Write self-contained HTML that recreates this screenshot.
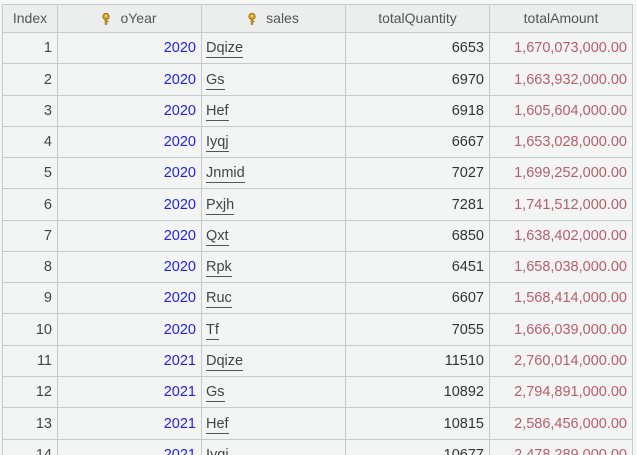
<!DOCTYPE html>
<html><head><style>
html,body{margin:0;width:637px;height:455px;overflow:hidden}
body{background:#f3f4f4;font-family:"Liberation Sans",sans-serif;font-size:14.5px;position:relative;color:#333}
.c{position:absolute;box-sizing:border-box;border-right:1px solid #c5cbcb;border-bottom:1px solid #c5cbcb;white-space:nowrap;overflow:hidden}
.h{background:#eceeee;color:#555;text-align:center;line-height:27px;font-size:14px}
.r{text-align:right;padding-right:5px}
.y{color:#2222ee}
.a{color:#b5606a}
.s{padding-left:4px;color:#444}
.s span{border-bottom:1.5px solid #555;padding-bottom:1px}
.k{display:inline-block;vertical-align:-2px;margin-right:10px}
</style></head><body>
<div style="position:absolute;left:0;top:0;width:637px;height:4px;background:#f7f7f7"></div>
<div id="g"></div>
<script>
const cols=[[2,58],[58,202],[202,346],[346,490],[490,633]];
const key='<svg class="k" width="8" height="12" viewBox="0 0 8 12"><circle cx="4" cy="3.5" r="3.2" fill="#d9a520" stroke="#8a6a10" stroke-width="0.8"/><rect x="3" y="6" width="2" height="5.5" fill="#c99a20" stroke="#8a6a10" stroke-width="0.5"/><rect x="5" y="8" width="1.5" height="1" fill="#8a6a10"/><circle cx="4" cy="3" r="1" fill="#f4e090"/></svg>';
const hd=['Index',key+'oYear',key+'sales','totalQuantity','totalAmount'];
const data=[["Dqize",6653,"1,670,073,000.00"],["Gs",6970,"1,663,932,000.00"],["Hef",6918,"1,605,604,000.00"],["Iyqj",6667,"1,653,028,000.00"],["Jnmid",7027,"1,699,252,000.00"],["Pxjh",7281,"1,741,512,000.00"],["Qxt",6850,"1,638,402,000.00"],["Rpk",6451,"1,658,038,000.00"],["Ruc",6607,"1,568,414,000.00"],["Tf",7055,"1,666,039,000.00"],["Dqize",11510,"2,760,014,000.00"],["Gs",10892,"2,794,891,000.00"],["Hef",10815,"2,586,456,000.00"],["Iyqj",10677,"2,478,289,000.00"]];
let h='';
cols.forEach((c,i)=>{h+=`<div class="c h" style="left:${c[0]}px;top:4px;width:${c[1]-c[0]}px;height:29px;${i==0?'border-left:1px solid #c5cbcb;':''}border-top:1px solid #c5cbcb">${hd[i]}</div>`});
data.forEach((d,r)=>{
 const t=Math.round(33+r*31.27), b=Math.round(33+(r+1)*31.27), ht=b-t;
 const v=[r+1,r<10?2020:2021,'<span>'+d[0]+'</span>',d[1],d[2]];
 const cl=['r','r y','s','r','r a'];
 cols.forEach((c,i)=>{h+=`<div class="c ${cl[i]}" style="left:${c[0]}px;top:${t}px;width:${c[1]-c[0]}px;height:${ht}px;line-height:${ht}px;${i==0?'border-left:1px solid #c5cbcb;color:#444;':''}">${v[i]}</div>`});
});
document.getElementById('g').innerHTML=h;
</script>
</body></html>
